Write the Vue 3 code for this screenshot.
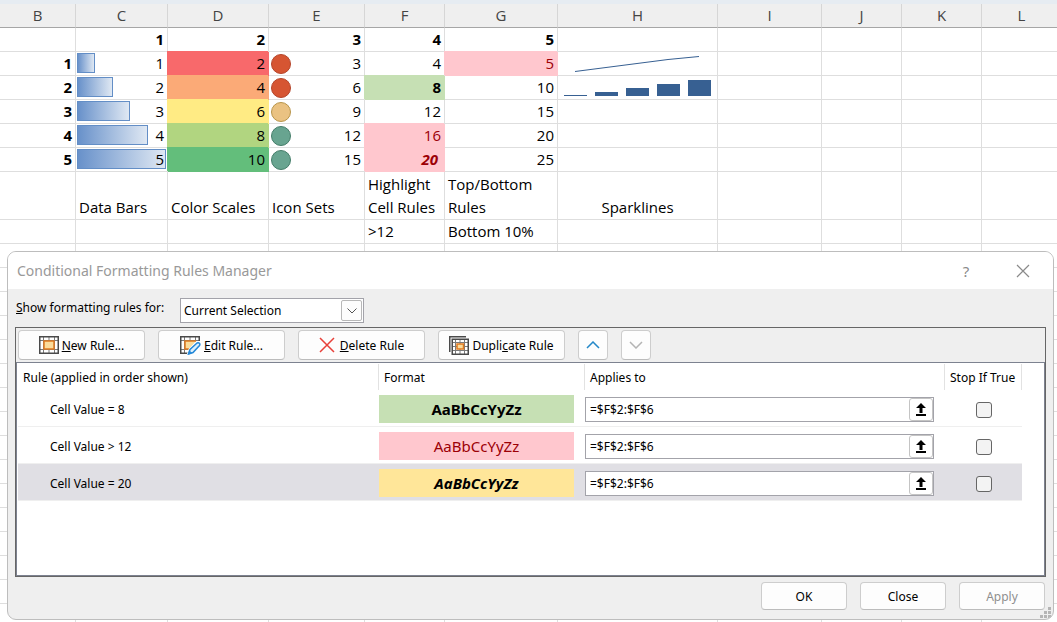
<template>
  <main class="workbook">
    <table class="sheet">
      <colgroup>
        <col
          v-for="col in columns"
          :key="col.name"
          :style="{ width: col.width + 'px' }"
        />
      </colgroup>
      <thead>
        <tr>
          <th
            v-for="col in columns"
            :key="col.name"
            scope="col"
          >
            {{ col.name }}
          </th>
        </tr>
      </thead>
      <tbody>
        <tr>
          <td></td>
          <td
            v-for="n in 5"
            :key="n"
            class="num bold"
          >
            {{ n }}
          </td>
          <td
            v-for="n in 5"
            :key="n"
          ></td>
        </tr>
        <tr
          v-for="n in 5"
          :key="n"
        >
          <td class="num bold">{{ n }}</td>
          <td class="num">
            <div class="bar-box">
              <div
                class="bar"
                :style="{ width: n * 20 + '%' }"
              ></div>
              <span>{{ n }}</span>
            </div>
          </td>
          <td
            class="num fill"
            :class="'scale-' + n"
          >
            {{ n * 2 }}
          </td>
          <td class="num">
            <div class="icon-box">
              <i
                class="dot"
                :class="dots[n - 1]"
              ></i>
              <span>{{ n * 3 }}</span>
            </div>
          </td>
          <td
            class="num"
            :class="highlights[n - 1]"
          >
            {{ n * 4 }}
          </td>
          <td
            class="num"
            :class="{ 'fill bad': n === 1 }"
          >
            {{ n * 5 }}
          </td>
          <td class="spark">
            <svg
              v-if="n === 1"
              width="159"
              height="23"
            >
              <polyline
                points="17,19.5 48,15.5 79,11.5 110,7.5 141,4.5"
                fill="none"
                stroke="#376092"
              />
            </svg>
            <svg
              v-if="n === 2"
              width="159"
              height="23"
              fill="#376092"
            >
              <rect
                v-for="(h, i) in sparkBars"
                :key="i"
                :x="6 + i * 31"
                :y="20 - h"
                width="23"
                :height="h"
              />
            </svg>
          </td>
          <td
            v-for="m in 4"
            :key="m"
          ></td>
        </tr>
        <tr class="tall">
          <td></td>
          <td>Data Bars</td>
          <td>Color Scales</td>
          <td>Icon Sets</td>
          <td>Highlight<br />Cell Rules</td>
          <td>Top/Bottom<br />Rules</td>
          <td class="center">Sparklines</td>
          <td
            v-for="n in 4"
            :key="n"
          ></td>
        </tr>
        <tr>
          <td
            v-for="n in 4"
            :key="n"
          ></td>
          <td>&gt;12</td>
          <td>Bottom 10%</td>
          <td
            v-for="n in 5"
            :key="n"
          ></td>
        </tr>
        <tr
          v-for="n in 16"
          :key="n"
        >
          <td
            v-for="m in 11"
            :key="m"
          ></td>
        </tr>
      </tbody>
    </table>

    <section
      class="dialog"
      role="dialog"
      aria-labelledby="dialog-title"
    >
      <header class="titlebar">
        <h1 id="dialog-title">Conditional Formatting Rules Manager</h1>
        <button
          type="button"
          class="title-btn"
        >
          ?
        </button>
        <button
          type="button"
          class="title-btn"
          aria-label="Close window"
        >
          <svg
            width="14"
            height="14"
            stroke="#8a8a8a"
            stroke-width="1.2"
          >
            <path d="M1 1 13 13M13 1 1 13" />
          </svg>
        </button>
      </header>

      <div class="scope">
        <label for="scope"><u>S</u>how formatting rules for:</label>
        <div class="select-box">
          <select
            id="scope"
            v-model="scope"
          >
            <option>Current Selection</option>
            <option>This Worksheet</option>
          </select>
          <span class="arrow">
            <svg
              width="10"
              height="6"
              fill="none"
              stroke="#555"
            >
              <path d="M.5.5 5 5 9.5.5" />
            </svg>
          </span>
        </div>
      </div>

      <div class="frame">
        <div class="toolbar">
          <button
            type="button"
            class="btn tool"
          >
            <svg
              width="20"
              height="18"
            >
              <rect x="1" y="1" width="18" height="16" fill="#fff" />
              <path d="M1 4.5H19M1 13.5H19M4.5 1V17M15.500 1V17M10 1V17" stroke="#7a7a7a" />
              <rect x=".75" y=".75" width="18.500" height="16.500" fill="none" stroke="#4a4a4a" stroke-width="1.500" />
              <rect x="5" y="5" width="10" height="8" fill="#fbdc9b" stroke="#e07a1f" stroke-width="1.500" />
            </svg>
            <span><u>N</u>ew Rule...</span>
          </button>
          <button
            type="button"
            class="btn tool"
          >
            <svg
              width="21"
              height="19"
            >
              <rect x="1" y="1" width="18" height="16" fill="#fff" />
              <path d="M1 4.5H19M1 13.5H10M4.5 1V17M15.500 1V5M10 1V5" stroke="#7a7a7a" />
              <path d="M19.250 5V.75H.75V17.250H8" fill="none" stroke="#4a4a4a" stroke-width="1.500" />
              <path d="M5 5H16L9 13H5Z" fill="#fbdc9b" />
              <path d="M16 5H5V13H9" fill="none" stroke="#e07a1f" stroke-width="1.500" />
              <path d="M8.500 18 10 13.500 17 7C19 6 20.500 8 19.500 9.500L13 16.500Z" fill="#dff1fc" stroke="#fdfdfd" stroke-width="3" />
              <path d="M8.500 18 10 13.500 17 7C19 6 20.500 8 19.500 9.500L13 16.500Z" fill="#dff1fc" stroke="#2488d8" stroke-width="1.500" />
              <path d="M8.500 18 9.500 15 11.500 17Z" fill="#2488d8" stroke="#2488d8" />
            </svg>
            <span><u>E</u>dit Rule...</span>
          </button>
          <button
            type="button"
            class="btn tool"
          >
            <svg
              class="cross"
              width="16"
              height="16"
              stroke="#e8403a"
              stroke-width="1.500"
            >
              <path d="M1 1 15 15M15 1 1 15" />
            </svg>
            <span><u>D</u>elete Rule</span>
          </button>
          <button
            type="button"
            class="btn tool"
          >
            <svg
              width="20"
              height="19"
            >
              <path d="M.75 16V.75H17" fill="none" stroke="#4a4a4a" stroke-width="1.500" />
              <rect x="3" y="3" width="16" height="15" fill="#fff" />
              <path d="M3 6.500H19M3 14.500H19M6.500 3V18M15.500 3V18M11 3V18M3 10.500H19" stroke="#7a7a7a" />
              <rect x="3.250" y="3.250" width="16" height="15" fill="none" stroke="#4a4a4a" stroke-width="1.500" />
              <rect x="8" y="8" width="6.500" height="5" fill="#fbdc9b" stroke="#e07a1f" stroke-width="1.500" />
            </svg>
            <span>Dupli<u>c</u>ate Rule</span>
          </button>
          <button
            type="button"
            class="btn move"
            aria-label="Move up"
          >
            <svg
              width="14"
              height="8"
              fill="none"
              stroke="#2488c8"
              stroke-width="1.500"
            >
              <path d="M1 7 7 1 13 7" />
            </svg>
          </button>
          <button
            type="button"
            class="btn move"
            aria-label="Move down"
            disabled
          >
            <svg
              width="14"
              height="8"
              fill="none"
              stroke="#b4b4b4"
              stroke-width="1.500"
            >
              <path d="M1 1 7 7 13 1" />
            </svg>
          </button>
        </div>

        <div class="list">
          <table class="rules">
            <colgroup>
              <col class="c-rule" />
              <col class="c-format" />
              <col />
              <col class="c-stop" />
            </colgroup>
            <thead>
              <tr>
                <th scope="col"><div>Rule (applied in order shown)</div></th>
                <th scope="col"><div>Format</div></th>
                <th scope="col"><div>Applies to</div></th>
                <th scope="col"><div>Stop If True</div></th>
              </tr>
            </thead>
            <tbody>
              <tr
                v-for="rule in rules"
                :key="rule.name"
                :class="{ selected: rule.selected }"
              >
                <td class="name">{{ rule.name }}</td>
                <td>
                  <div
                    class="preview"
                    :class="rule.format"
                  >
                    AaBbCcYyZz
                  </div>
                </td>
                <td>
                  <div class="range">
                    <input
                      v-model="rule.range"
                      type="text"
                      :aria-label="'Applies to, ' + rule.name"
                    />
                    <button
                      type="button"
                      aria-label="Collapse dialog"
                    >
                      <svg
                        width="10"
                        height="13"
                      >
                        <path d="M5 0 10 5H6.500V10H3.500V5H0ZM0 11H10V13H0Z" />
                      </svg>
                    </button>
                  </div>
                </td>
                <td class="stop">
                  <input
                    v-model="rule.stop"
                    type="checkbox"
                    :aria-label="'Stop if true, ' + rule.name"
                  />
                </td>
              </tr>
            </tbody>
          </table>
        </div>
      </div>

      <footer class="actions">
        <button
          type="button"
          class="btn"
        >
          OK
        </button>
        <button
          type="button"
          class="btn"
        >
          Close
        </button>
        <button
          type="button"
          class="btn"
          disabled
        >
          Apply
        </button>
      </footer>

      <svg
        class="grip"
        width="11"
        height="11"
        fill="#b5b5b5"
      >
        <path d="M8 0h3v3h-3zM4 4h3v3h-3zM8 4h3v3h-3zM0 8h3v3h-3zM4 8h3v3h-3zM8 8h3v3h-3z" />
      </svg>
    </section>
  </main>
</template>

<script setup>
import { ref } from 'vue';

const columns = [
  { name: 'B', width: 76 },
  { name: 'C', width: 92 },
  { name: 'D', width: 101 },
  { name: 'E', width: 96 },
  { name: 'F', width: 80 },
  { name: 'G', width: 113 },
  { name: 'H', width: 160 },
  { name: 'I', width: 104 },
  { name: 'J', width: 80 },
  { name: 'K', width: 80 },
  { name: 'L', width: 80 },
];

const dots = ['red', 'red', 'yellow', 'green', 'green'];
const highlights = ['', 'fill good', '', 'fill bad', 'fill bad strong'];
const sparkBars = [1, 4, 8, 12, 16];

const scope = ref('Current Selection');

const rules = ref([
  { name: 'Cell Value = 8', format: 'f-green', range: '=$F$2:$F$6', stop: false },
  { name: 'Cell Value > 12', format: 'f-red', range: '=$F$2:$F$6', stop: false },
  { name: 'Cell Value = 20', format: 'f-yellow', range: '=$F$2:$F$6', stop: false, selected: true },
]);
</script>

<style>
body {
  margin: 0;
}
</style>

<style scoped>
.workbook {
  position: relative;
  height: 100vh;
  box-sizing: border-box;
  overflow: hidden;
  border-top: 4px solid #e6ecf2;
  background: #fff;
  font-family: 'Noto Sans', 'Open Sans', sans-serif;
  font-size: 12px;
  color: #000;
}

table {
  table-layout: fixed;
  border-spacing: 0;
}

/* worksheet */
.sheet {
  width: 1062px;
  font-family: 'Open Sans', 'Noto Sans', sans-serif;
  font-size: 15px;
  line-height: 23px;
}

.sheet th {
  height: 23px;
  padding: 0;
  font-weight: 400;
  color: #444;
  background: #efefef;
  border-right: 1px solid #d6d6d6;
  border-bottom: 1px solid #a6a6a6;
}

.sheet td {
  height: 23px;
  padding: 0 3px;
  vertical-align: bottom;
  white-space: nowrap;
  border-right: 1px solid #dedede;
  border-bottom: 1px solid #dedede;
}

.sheet .tall td {
  height: 47px;
}

.sheet .num {
  text-align: right;
}

.sheet .bold {
  font-weight: 700;
}

.sheet .center {
  text-align: center;
}

.sheet .spark {
  padding: 0;
}

.spark svg {
  display: block;
}

.sheet .fill {
  --fill: #ffc7ce;
  background: var(--fill);
  border-color: var(--fill);
  box-shadow: -1px -1px 0 var(--fill);
}

.sheet .scale-1 {
  --fill: #f8696b;
}

.sheet .scale-2 {
  --fill: #fbaa77;
}

.sheet .scale-3 {
  --fill: #ffeb84;
}

.sheet .scale-4 {
  --fill: #b1d580;
}

.sheet .scale-5 {
  --fill: #63be7b;
}

.sheet .good {
  --fill: #c6e0b4;
  font-weight: 700;
}

.sheet .bad {
  color: #9c0006;
}

.sheet .strong {
  font-weight: 700;
  font-style: italic;
  padding-right: 6px;
}

.bar-box {
  position: relative;
  margin: 0 -2px;
  padding-right: 2px;
}

.bar {
  position: absolute;
  top: 1px;
  left: 0;
  height: 20px;
  box-sizing: border-box;
  border: 1px solid #638ec6;
  background: linear-gradient(90deg, #6891ca, #dfe8f3);
}

.bar-box span {
  position: relative;
}

.icon-box {
  display: flex;
  align-items: center;
  justify-content: space-between;
}

.dot {
  width: 20px;
  height: 20px;
  box-sizing: border-box;
  margin-left: -1px;
  border: 1px solid #b5452a;
  border-radius: 50%;
  background: #d65532;
}

.dot.yellow {
  background: #eac282;
  border-color: #b8954a;
}

.dot.green {
  background: #68a490;
  border-color: #447d69;
}

/* dialog window */
.dialog {
  position: absolute;
  top: 247px;
  left: 7px;
  right: 3px;
  border: 1px solid #bdbdbd;
  border-radius: 9px;
  background: #efefef;
  overflow: hidden;
}

.titlebar {
  display: flex;
  align-items: center;
  height: 37px;
  padding: 0 9px;
  background: #fff;
}

.titlebar h1 {
  flex: 1;
  margin: 0;
  font-size: 14px;
  font-weight: 400;
  color: #999;
}

.title-btn {
  display: flex;
  align-items: center;
  justify-content: center;
  width: 42px;
  height: 30px;
  margin-left: 15px;
  padding: 0;
  border: 0;
  background: none;
  font: inherit;
  font-size: 15px;
  color: #8a8a8a;
}

.scope {
  display: flex;
  align-items: flex-start;
  gap: 12px;
  padding: 9px 8px 4px;
}

.scope label {
  width: 152px;
  line-height: 20px;
  white-space: nowrap;
}

.select-box {
  position: relative;
  width: 184px;
}

select {
  display: block;
  width: 100%;
  height: 25px;
  box-sizing: border-box;
  padding: 0 3px;
  border: 1px solid #a3a3aa;
  border-radius: 0;
  background: #fff;
  appearance: none;
  font: inherit;
  color: #000;
}

.arrow {
  position: absolute;
  top: 2px;
  right: 2px;
  display: flex;
  align-items: center;
  justify-content: center;
  width: 21px;
  height: 21px;
  box-sizing: border-box;
  border: 1px solid #b8b8b8;
  border-radius: 2px;
  background: #fdfdfd;
  pointer-events: none;
}

.frame {
  margin: 0 7px;
  border: 1px solid #666;
}

.toolbar {
  display: flex;
  gap: 13px;
  padding: 2px;
}

.btn {
  display: flex;
  align-items: center;
  justify-content: center;
  gap: 3px;
  width: 86px;
  height: 28px;
  box-sizing: border-box;
  padding: 0;
  border: 1px solid #cdcdcd;
  border-bottom-color: #bcbcbc;
  border-radius: 4px;
  background: #fdfdfd;
  font: inherit;
  color: #000;
  white-space: nowrap;
}

.btn:disabled {
  color: #8f8f8f;
}

.btn.tool {
  width: 127px;
  height: 30px;
}

.btn.move {
  width: 30px;
  height: 30px;
}

.btn .cross {
  margin-right: 2px;
}

.list {
  min-height: 212px;
  border: 1px solid #7d8290;
  background: #fff;
}

.rules {
  width: calc(100% - 23px);
  margin-left: 1px;
}

.c-rule {
  width: 361px;
}

.c-format {
  width: 206px;
}

.c-stop {
  width: 77px;
}

.rules th {
  padding: 1px 0 0;
  font-weight: 400;
  text-align: left;
  white-space: nowrap;
}

.rules th div {
  height: 26px;
  padding-left: 5px;
  line-height: 27px;
  border-right: 1px solid #e2e2e2;
}

.rules td {
  height: 34px;
  padding: 2px 0 0;
  border-bottom: 1px solid #efefef;
}

.rules .name {
  padding-left: 32px;
}

.rules .selected td {
  background: #e0dfe4;
}

.preview {
  height: 28px;
  margin-right: 11px;
  font-size: 15px;
  line-height: 28px;
  text-align: center;
}

.f-green {
  background: #c6e0b4;
  font-weight: 700;
}

.f-red {
  background: #ffc7ce;
  color: #9c0006;
}

.f-yellow {
  background: #ffe699;
  font-weight: 700;
  font-style: italic;
}

.range {
  display: flex;
  height: 25px;
  box-sizing: border-box;
  margin-right: 11px;
  border: 1px solid #a3a3aa;
  background: #fff;
}

.range input {
  flex: 1;
  min-width: 0;
  padding: 0 4px;
  border: 0;
  background: none;
  font: inherit;
  color: #000;
}

.range button {
  display: flex;
  align-items: center;
  justify-content: center;
  width: 24px;
  padding: 0;
  border: 1px solid #c4c4c4;
  border-radius: 3px;
  background: #fff;
}

.rules .stop {
  text-align: center;
}

.stop input {
  width: 16px;
  height: 16px;
  margin: 0;
  border: 1px solid #666;
  border-radius: 3px;
  background: #f3f3f3;
  appearance: none;
  vertical-align: middle;
}

.stop input:checked {
  background: #2488c8;
}

.actions {
  display: flex;
  justify-content: flex-end;
  gap: 13px;
  padding: 5px 8px 9px;
}

.grip {
  position: absolute;
  right: 2px;
  bottom: 1px;
}
</style>
